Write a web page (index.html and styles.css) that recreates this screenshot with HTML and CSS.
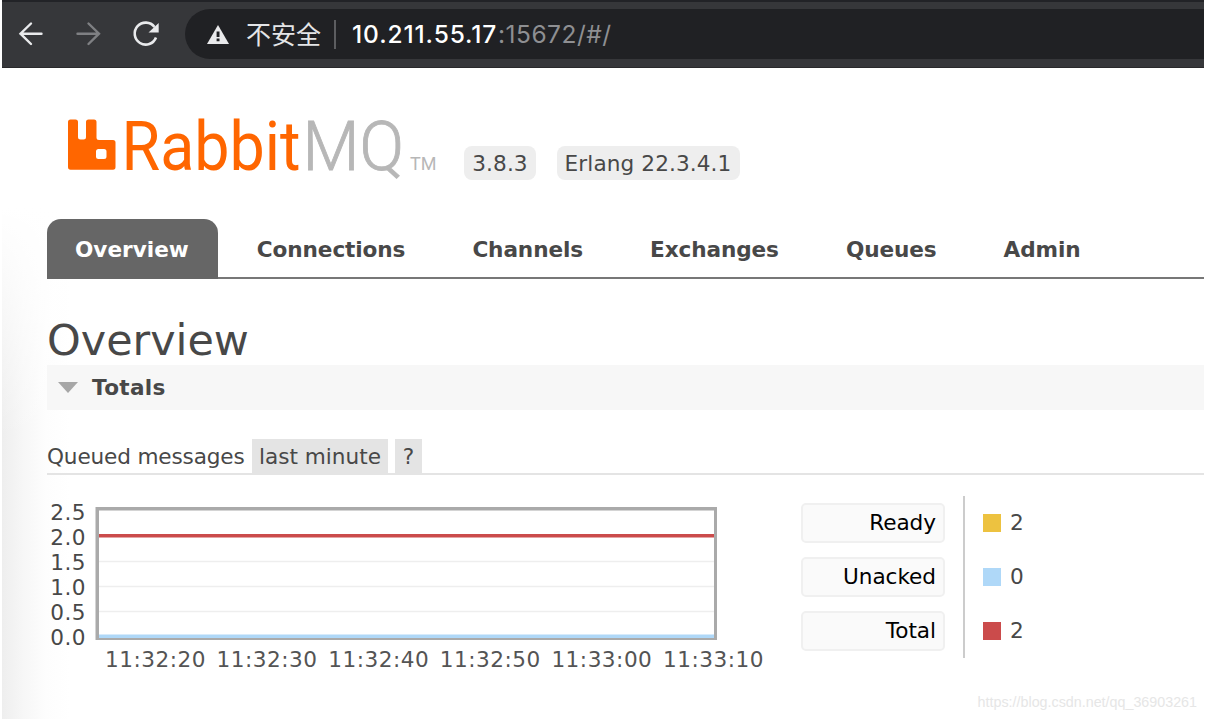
FILE: index.html
```html
<!DOCTYPE html>
<html lang="en">
<head>
<meta charset="utf-8">
<title>RabbitMQ Management</title>
<link rel="stylesheet" href="styles.css">
</head>
<body>
<div class="window">
  <div class="toolbar">
    <svg class="nav-icons" width="184" height="66" viewBox="2 2 184 66" fill="none" stroke-width="2.4">
      <path stroke="#e9eaec" stroke-linecap="round" d="M41.500 33.700H20.500M31 23.500L20.500 33.700L31 44"/>
      <path stroke="#7f8083" stroke-linecap="round" d="M77.500 33.700H99M88.500 23.500L99 33.700L88.500 44"/>
      <path stroke="#e9eaec" stroke-width="2.6" d="M154.500 27A11 11 0 1 0 156 37.500"/>
      <path fill="#e9eaec" d="M158.700 23V32.500H148.500Z"/>
    </svg>
    <div class="address">
      <svg class="warning" width="22" height="19" viewBox="0 0 22 19">
        <path fill="#e9eaec" d="M11 0L22 19H0Z"/>
        <path fill="#202124" d="M9.600 6.500h2.900v5.500h-2.900zM9.600 13.500h2.900v2.800h-2.900z"/>
      </svg>
      <span class="insecure">不安全</span>
      <span class="divider"></span>
      <span class="host">10.211.55.17</span><span class="path">:15672/#/</span>
    </div>
  </div>

  <div class="page">
    <header class="header">
      <svg class="logo" width="372" height="100" viewBox="66 95 372 100">
        <path fill="#ff6600" fill-rule="evenodd" d="M70.500 119.500H75.500Q78 119.500 78 122V137Q78 139.500 80.500 139.500H83.500Q86 139.500 86 137V122Q86 119.500 88.500 119.500H94Q96.500 119.500 96.500 122V137.500Q96.500 140 99 140H113Q115.500 140 115.500 142.500V167Q115.500 169.700 113 169.700H70.500Q68 169.700 68 167V122Q68 119.500 70.500 119.500ZM98.500 149Q96 149 96 151.500V156.500Q96 159 98.500 159H104Q106.500 159 106.500 156.500V151.500Q106.500 149 104 149Z"/>
        <text class="logo-rabbit" x="121.500" y="169.700" textLength="179" lengthAdjust="spacingAndGlyphs">Rabbit</text>
        <text class="logo-mq" x="302.500" y="169.700" textLength="101.500" lengthAdjust="spacingAndGlyphs">MQ</text>
        <text class="logo-tm" x="410" y="169.700" textLength="26.500" lengthAdjust="spacingAndGlyphs">TM</text>
      </svg>
      <span class="version">3.8.3</span>
      <span class="version erlang">Erlang 22.3.4.1</span>
    </header>

    <nav class="tabs">
      <a class="tab selected">Overview</a>
      <a class="tab">Connections</a>
      <a class="tab">Channels</a>
      <a class="tab">Exchanges</a>
      <a class="tab">Queues</a>
      <a class="tab">Admin</a>
    </nav>

    <main class="main">
      <h1>Overview</h1>
      <h2><svg width="20" height="11" viewBox="0 0 20 11"><path fill="#a7a7a7" d="M0 0H20L10 11Z"/></svg>Totals</h2>
      <div class="subhead">
        <span class="label">Queued messages</span>
        <span class="chip range">last minute</span>
        <span class="chip help">?</span>
      </div>
      <div class="stats">
        <div class="y-axis"><span>2.5</span><span>2.0</span><span>1.5</span><span>1.0</span><span>0.5</span><span>0.0</span></div>
        <div class="plot">
          <svg width="622" height="133" viewBox="95 507 622 133">
            <path stroke="#eeeeee" stroke-width="1.500" d="M98 561.500H714M98 586.500H714M98 611.500H714"/>
            <path fill="#aaaaaa" fill-rule="evenodd" d="M95.500 507H717V640H95.500ZM99 510.500V638H714V510.500Z"/>
            <path fill="#afd8f8" d="M99 634.500H714V638H99Z"/>
            <path fill="#cb4b4b" d="M99 534H714V537.400H99Z"/>
          </svg>
          <div class="x-axis"><span>11:32:20</span><span>11:32:30</span><span>11:32:40</span><span>11:32:50</span><span>11:33:00</span><span>11:33:10</span></div>
        </div>
        <div class="legend">
          <span class="key">Ready</span>
          <span class="key">Unacked</span>
          <span class="key">Total</span>
        </div>
        <div class="values">
          <div class="value"><i class="swatch ready"></i>2</div>
          <div class="value"><i class="swatch unacked"></i>0</div>
          <div class="value"><i class="swatch total"></i>2</div>
        </div>
      </div>
    </main>
    <div class="watermark">https://blog.csdn.net/qq_36903261</div>
  </div>
</div>
</body>
</html>
```
FILE: styles.css
```css
* { box-sizing: border-box; }
body {
  margin: 0;
  background: #fff;
  color: #484848;
  font: 21.6px/26px "DejaVu Sans", Verdana, sans-serif;
  overflow: hidden;
}
.window { width: 1202px; height: 719px; margin-left: 2px; overflow: hidden; }
.toolbar {
  display: flex;
  height: 68px;
  background: #36373a;
  border-top: 2px solid #222327;
  border-bottom: 1px solid #29292b;
}
.nav-icons { flex: none; margin-right: -1px; }
.address {
  display: flex;
  align-items: center;
  flex: 1;
  height: 50px;
  margin-top: 7px;
  padding-left: 22px;
  border-radius: 25px 0 0 25px;
  background: #202124;
  white-space: nowrap;
  font-family: Inter, "Noto Sans CJK SC", sans-serif;
  font-size: 24.5px;
}
.warning { margin-top: 1px; }
.insecure { margin: -2px 0 0 17px; width: 77px; font-family: "Noto Sans CJK SC", sans-serif; font-size: 25px; color: #e4e5e7; }
.divider { width: 2px; height: 29px; margin: 0 16px 0 11px; background: #5c5d60; }
.host { width: 146px; color: #fff; font-weight: 500; letter-spacing: .9px; }
.path { color: #8e8f92; letter-spacing: .5px; }

.page {
  height: 651px;
  background:
    linear-gradient(to bottom, #fff 140px, rgba(255,255,255,0) 370px),
    linear-gradient(to right, #eeeeee 0, #f7f7f7 22px, #fdfdfd 44px, #fff 68px);
}
.header { display: flex; height: 151px; padding: 27px 0 0 64px; }
.logo { flex: none; }
.logo text { font-family: Roboto, sans-serif; font-size: 69px; }
.logo .logo-rabbit { fill: #ff6600; }
.logo .logo-mq { fill: #b7b7b7; stroke: #b7b7b7; stroke-width: .9px; font-weight: 300; }
.logo .logo-tm { fill: #b7b7b7; font-size: 18.5px; }
.version {
  width: 72px;
  height: 34px;
  margin: 51px 0 0 26px;
  border-radius: 8px;
  background: #eee;
  line-height: 35px;
  text-align: center;
  white-space: nowrap;
  letter-spacing: .1px;
}
.erlang { width: 183px; margin-left: 21px; padding-right: 1px; }

.tabs {
  display: flex;
  gap: 11px;
  height: 60px;
  margin-left: 45px;
  border-bottom: 2px solid #777;
  font-weight: bold;
  line-height: 62px;
}
.tab { padding: 0 28px; letter-spacing: -.1px; }
.selected { height: 60px; padding-right: 29px; border-radius: 14px 14px 0 0; background: #666; color: #fff; letter-spacing: 0; }

.main { margin-left: 45px; }
h1 { height: 86px; margin: 0; padding-top: 35px; font-size: 42.900px; font-weight: normal; line-height: 52px; }
h2 {
  display: flex;
  align-items: center;
  gap: 14px;
  height: 45px;
  margin: 0;
  padding-left: 11px;
  background: #f7f7f7;
  font-size: 21.600px;
  letter-spacing: .3px;
}
.subhead {
  display: flex;
  height: 65px;
  padding-top: 29px;
  border-bottom: 2px solid #e4e4e4;
  line-height: 35px;
}
.label { width: 205px; white-space: nowrap; letter-spacing: -.15px; }
.chip { background: #e4e4e4; text-align: center; white-space: nowrap; }
.range { width: 136px; }
.help { width: 27px; margin-left: 7px; }

.stats { display: flex; height: 185px; }
.y-axis { display: flex; flex-direction: column; width: 39px; margin-right: 9px; padding-top: 25px; text-align: right; letter-spacing: .5px; }
.y-axis span { line-height: 25.100px; }
.plot { width: 670px; padding-top: 32px; color: #545454; }
.plot svg { display: block; }
.x-axis { display: flex; padding: 7px 0 0 10px; letter-spacing: .5px; }
.x-axis span { flex: none; width: 111.600px; }
.legend {
  display: flex;
  flex-direction: column;
  gap: 14px;
  width: 200px;
  height: 162px;
  margin-top: 21px;
  padding: 7px 18px 0 36px;
  border-right: 2px solid #ccc;
}
.key {
  height: 40px;
  padding-right: 7px;
  border: 2px solid #f0f0f0;
  border-radius: 5px;
  background: #fafafa;
  color: #000;
  line-height: 36px;
  text-align: right;
  letter-spacing: -.05px;
}
.values { padding: 21px 0 0 18px; }
.value { display: flex; align-items: center; gap: 9px; height: 54px; }
.swatch { width: 18px; height: 18px; }
.ready { background: #edc240; }
.unacked { background: #afd8f8; }
.total { background: #cb4b4b; }
.watermark {
  padding: 33px 7px 0 0;
  color: #e6e6e6;
  font: 14.300px/18px "Liberation Sans", sans-serif;
  text-align: right;
}
```
